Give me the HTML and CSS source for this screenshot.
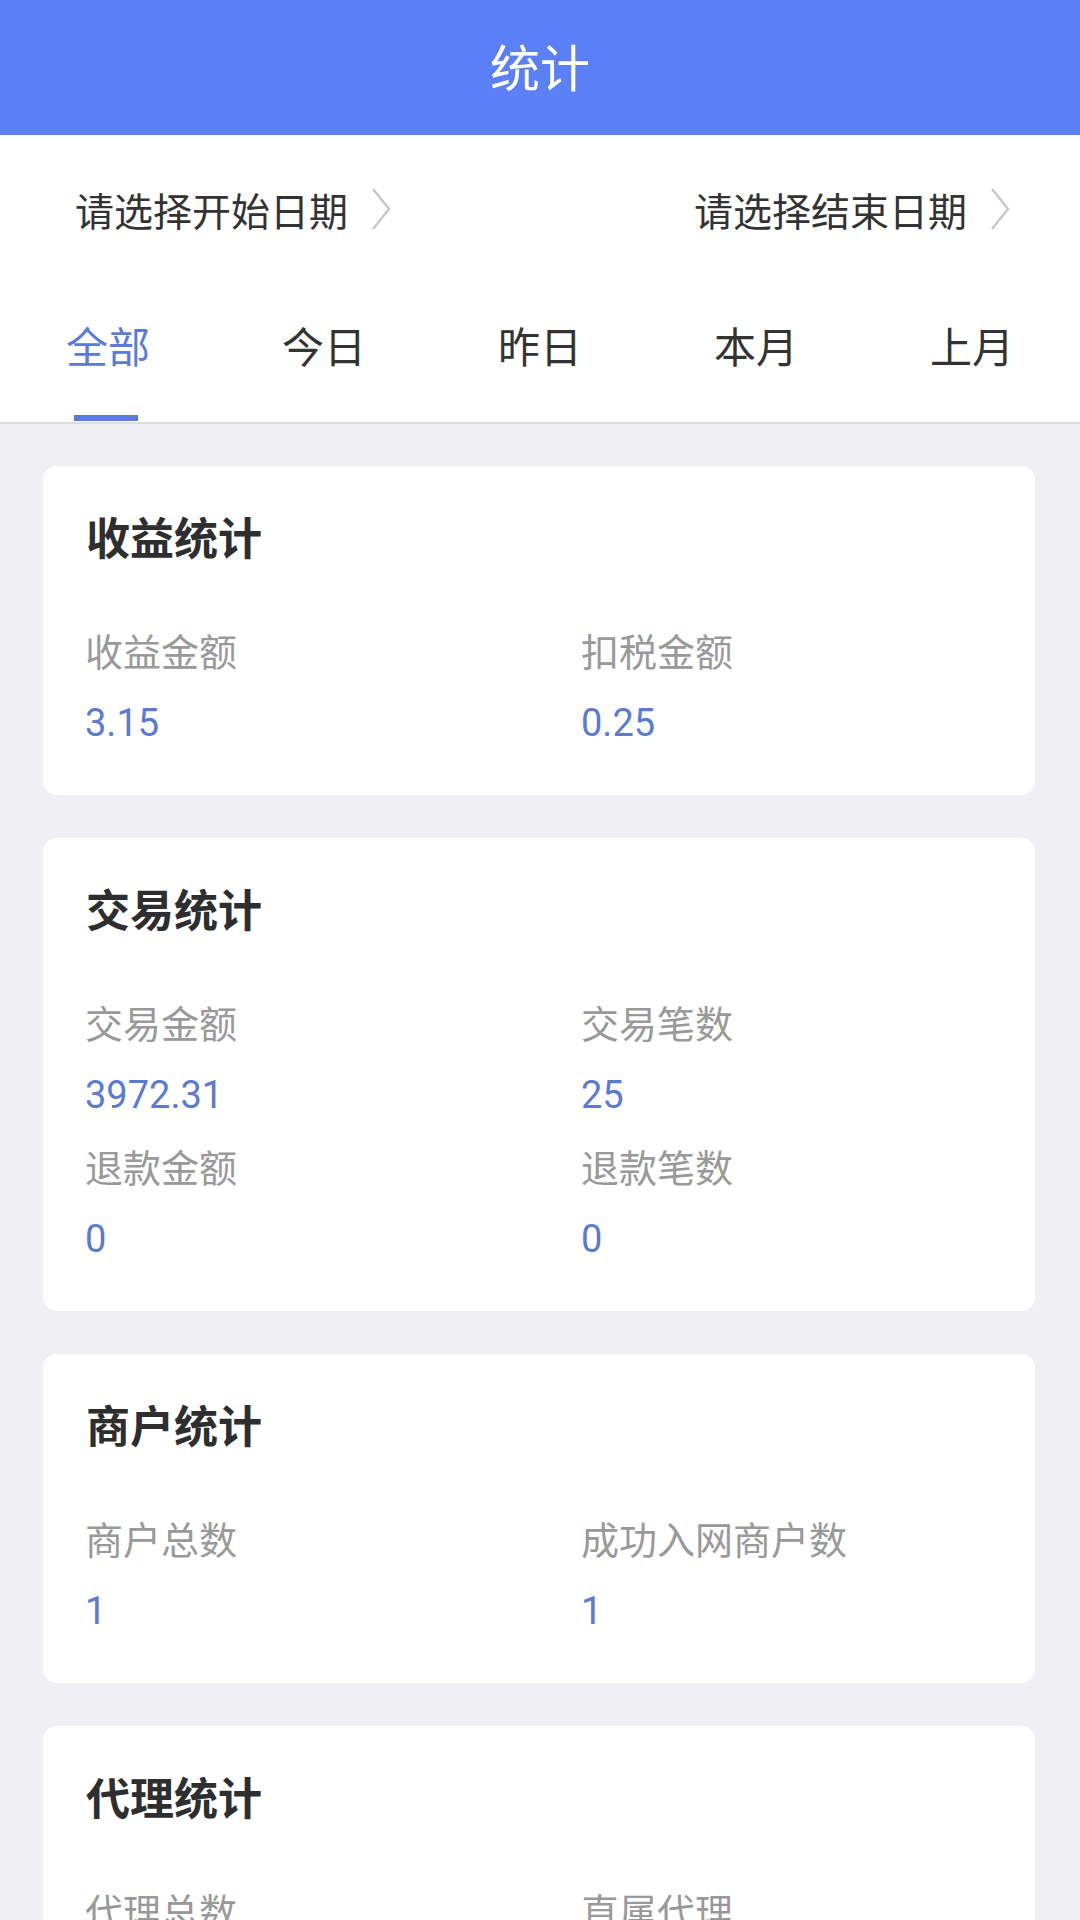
FILE: index.html
```html
<!DOCTYPE html>
<html lang="zh-CN">
<head>
    <meta charset="UTF-8">
    <meta name="viewport" content="width=device-width, initial-scale=1.0">
    <title>统计</title>
    <link rel="stylesheet" href="styles.css">
</head>
<body>
    <!-- Header -->
    <div class="header">统计</div>

    <!-- Date pickers -->
    <div class="date-bar">
        <div class="date-pick">
            <span>请选择开始日期</span>
            <svg class="chevron" width="22" height="44" viewBox="0 0 22 44"><polyline points="3,2 19,22 3,42" fill="none" stroke="#c8c8c8" stroke-width="2.5"/></svg>
        </div>
        <div class="date-pick">
            <span>请选择结束日期</span>
            <svg class="chevron" width="22" height="44" viewBox="0 0 22 44"><polyline points="3,2 19,22 3,42" fill="none" stroke="#c8c8c8" stroke-width="2.5"/></svg>
        </div>
    </div>

    <!-- Tabs -->
    <div class="tabs">
        <div class="tab active">全部</div>
        <div class="tab">今日</div>
        <div class="tab">昨日</div>
        <div class="tab">本月</div>
        <div class="tab">上月</div>
    </div>

    <div class="content">
        <div class="card">
            <div class="card-title">收益统计</div>
            <div class="stats">
                <div class="stat">
                    <div class="stat-label">收益金额</div>
                    <div class="stat-value">3.15</div>
                </div>
                <div class="stat">
                    <div class="stat-label">扣税金额</div>
                    <div class="stat-value">0.25</div>
                </div>
            </div>
        </div>

        <div class="card">
            <div class="card-title">交易统计</div>
            <div class="stats">
                <div class="stat">
                    <div class="stat-label">交易金额</div>
                    <div class="stat-value">3972.31</div>
                </div>
                <div class="stat">
                    <div class="stat-label">交易笔数</div>
                    <div class="stat-value">25</div>
                </div>
                <div class="stat">
                    <div class="stat-label">退款金额</div>
                    <div class="stat-value">0</div>
                </div>
                <div class="stat">
                    <div class="stat-label">退款笔数</div>
                    <div class="stat-value">0</div>
                </div>
            </div>
        </div>

        <div class="card">
            <div class="card-title">商户统计</div>
            <div class="stats">
                <div class="stat">
                    <div class="stat-label">商户总数</div>
                    <div class="stat-value">1</div>
                </div>
                <div class="stat">
                    <div class="stat-label">成功入网商户数</div>
                    <div class="stat-value">1</div>
                </div>
            </div>
        </div>

        <div class="card">
            <div class="card-title">代理统计</div>
            <div class="stats">
                <div class="stat">
                    <div class="stat-label">代理总数</div>
                    <div class="stat-value">0</div>
                </div>
                <div class="stat">
                    <div class="stat-label">直属代理</div>
                    <div class="stat-value">0</div>
                </div>
            </div>
        </div>
    </div>
</body>
</html>
```

FILE: styles.css
```css
body {
    margin: 0;
    padding: 0;
    background: #efeff4;
    font-family: Roboto, "Noto Sans CJK SC", sans-serif;
    color: #333;
    overflow: hidden;
}

.header {
    height: 135px;
    background: #5a7ff7;
    color: #fff;
    font-size: 50px;
    display: flex;
    justify-content: center;
    align-items: center;
    padding-bottom: 6px;
    box-sizing: border-box;
}

.date-bar {
    height: 148px;
    background: #fff;
    display: flex;
    justify-content: space-between;
    align-items: center;
    padding: 0 69px 0 75px;
}

.date-pick {
    display: flex;
    align-items: center;
    gap: 22px;
    font-size: 39px;
    color: #333;
}

.chevron {
    display: block;
}

.tabs {
    display: flex;
    height: 139px;
    background: #fff;
    border-bottom: 2px solid #dddddf;
}

.tab {
    flex: 1;
    position: relative;
    text-align: center;
    font-size: 42px;
    line-height: 48px;
    padding-top: 42px;
    color: #333;
}

.tab.active {
    color: #5a7bd8;
}

.tab.active::after {
    content: "";
    position: absolute;
    left: 50%;
    bottom: 1px;
    width: 64px;
    height: 6px;
    margin-left: -34px;
    background: #5a7bd8;
}

.content {
    padding: 42px 45px 0 43px;
}

.card {
    background: #fff;
    border-radius: 14px;
    padding: 44px 0 33px;
    margin-bottom: 43px;
}

.card-title {
    font-size: 44px;
    line-height: 60px;
    font-weight: 700;
    color: #2e2e2e;
    padding-left: 43px;
    margin-bottom: 48px;
}

.stats {
    display: grid;
    grid-template-columns: 1fr 1fr;
}

.stat {
    padding: 0 0 4px 42px;
}

.stat-label {
    font-size: 38px;
    line-height: 70px;
    color: #999;
}

.stat-value {
    font-size: 38px;
    line-height: 70px;
    color: #5b7ad2;
}
```
